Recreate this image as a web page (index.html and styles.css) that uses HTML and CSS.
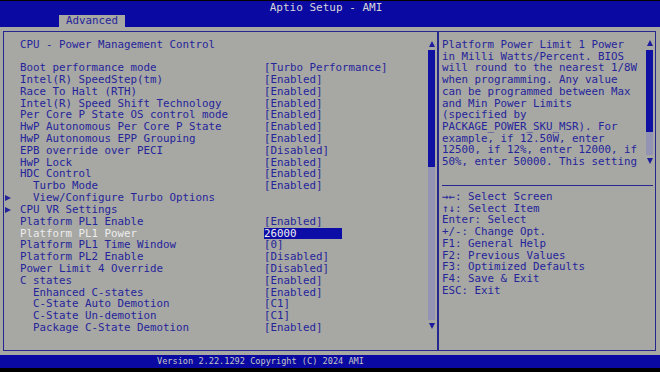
FILE: index.html
```html
<!DOCTYPE html>
<html lang="en">
<head>
  <meta charset="UTF-8">
  <meta name="viewport" content="width=device-width, initial-scale=1.0">
  <title>Aptio Setup - AMI</title>
  <link rel="stylesheet" href="styles.css">
</head>
<body>

  <div class="screen">
    <div class="topbar">
      <div class="title">Aptio Setup - AMI</div>
      <div class="tabs">
        <div class="tab">Advanced</div>
      </div>
    </div>

    <div class="main">
      <div class="panel left">
        <div class="content">
          <div class="heading">CPU - Power Management Control</div>
          <div class="blank"></div>
          <div class="row"><span class="label">Boot performance mode</span><span>[Turbo Performance]</span></div>
          <div class="row"><span class="label">Intel(R) SpeedStep(tm)</span><span>[Enabled]</span></div>
          <div class="row"><span class="label">Race To Halt (RTH)</span><span>[Enabled]</span></div>
          <div class="row"><span class="label">Intel(R) Speed Shift Technology</span><span>[Enabled]</span></div>
          <div class="row"><span class="label">Per Core P State OS control mode</span><span>[Enabled]</span></div>
          <div class="row"><span class="label">HwP Autonomous Per Core P State</span><span>[Enabled]</span></div>
          <div class="row"><span class="label">HwP Autonomous EPP Grouping</span><span>[Enabled]</span></div>
          <div class="row"><span class="label">EPB override over PECI</span><span>[Disabled]</span></div>
          <div class="row"><span class="label">HwP Lock</span><span>[Enabled]</span></div>
          <div class="row"><span class="label">HDC Control</span><span>[Enabled]</span></div>
          <div class="row sub"><span class="label">Turbo Mode</span><span>[Enabled]</span></div>
          <div class="row sub"><i class="marker"></i><span class="label">View/Configure Turbo Options</span><span></span></div>
          <div class="row"><i class="marker"></i><span class="label">CPU VR Settings</span><span></span></div>
          <div class="row"><span class="label">Platform PL1 Enable</span><span>[Enabled]</span></div>
          <div class="row active"><span class="label">Platform PL1 Power</span><span class="edit">26000</span></div>
          <div class="row"><span class="label">Platform PL1 Time Window</span><span>[0]</span></div>
          <div class="row"><span class="label">Platform PL2 Enable</span><span>[Disabled]</span></div>
          <div class="row"><span class="label">Power Limit 4 Override</span><span>[Disabled]</span></div>
          <div class="row"><span class="label">C states</span><span>[Enabled]</span></div>
          <div class="row sub"><span class="label">Enhanced C-states</span><span>[Enabled]</span></div>
          <div class="row sub"><span class="label">C-State Auto Demotion</span><span>[C1]</span></div>
          <div class="row sub"><span class="label">C-State Un-demotion</span><span>[C1]</span></div>
          <div class="row sub"><span class="label">Package C-State Demotion</span><span>[Enabled]</span></div>
        </div>
        <div class="scrollbar long">
          <i class="arrow-up"></i>
          <div class="track"><div class="thumb"></div></div>
          <i class="arrow-down"></i>
        </div>
      </div>

      <div class="panel right">
        <div class="help">
          <div class="help-text">
            <div>Platform Power Limit 1 Power</div>
            <div>in Milli Watts/Percent. BIOS</div>
            <div>will round to the nearest 1/8W</div>
            <div>when programming. Any value</div>
            <div>can be programmed between Max</div>
            <div>and Min Power Limits</div>
            <div>(specified by</div>
            <div>PACKAGE_POWER_SKU_MSR). For</div>
            <div>example, if 12.50W, enter</div>
            <div>12500, if 12%, enter 12000, if</div>
            <div>50%, enter 50000. This setting</div>
          </div>
          <div class="scrollbar short">
            <i class="arrow-up"></i>
            <div class="track"><div class="thumb"></div></div>
            <i class="arrow-down"></i>
          </div>
        </div>
        <div class="divider"></div>
        <div class="keys">
          <div>&rarr;&larr;: Select Screen</div>
          <div>&uarr;&darr;: Select Item</div>
          <div>Enter: Select</div>
          <div>+/-: Change Opt.</div>
          <div>F1: General Help</div>
          <div>F2: Previous Values</div>
          <div>F3: Optimized Defaults</div>
          <div>F4: Save &amp; Exit</div>
          <div>ESC: Exit</div>
        </div>
      </div>
    </div>

    <div class="footer">Version 2.22.1292 Copyright (C) 2024 AMI</div>
  </div>

</body>
</html>
```

FILE: styles.css
```css
body {
  margin: 0;
  padding: 0;
  background: #000;
  font-family: 'DejaVu Sans Mono', 'Liberation Mono', monospace;
  font-size: 10.8px;
  color: #25259a;
}

.screen {
  width: 660px;
  height: 372px;
  display: flex;
  flex-direction: column;
}

.topbar {
  margin-top: 1px;
  height: 26px;
  background: #0a0aa2;
}

.title {
  height: 14px;
  line-height: 14px;
  text-align: center;
  padding-right: 8px;
  color: #d6d6d6;
  font-size: 11px;
}

.tabs {
  display: flex;
  padding-left: 59px;
}

.tab {
  width: 59px;
  height: 12px;
  line-height: 12px;
  padding-left: 7px;
  background: #a7a7a4;
  color: #25259a;
}

.main {
  height: 320px;
  padding: 4px 4px 4px 3px;
  background: #a7a7a4;
  display: flex;
}

.panel {
  height: 318px;
  border: 1px solid #26268f;
  display: flex;
}

.left {
  width: 433px;
}

.right {
  width: 216px;
  flex-direction: column;
}

.content {
  flex: 1;
  padding: 6.5px 0 0 16px;
}

.heading, .blank, .row {
  height: 11.82px;
  line-height: 11.82px;
}

.row {
  position: relative;
  display: grid;
  grid-template-columns: 244px auto;
}

.row span {
  white-space: pre;
}

.row.sub .label {
  padding-left: 13px;
}

.row.active .label {
  color: #ececec;
}

.edit {
  width: 78px;
  background: #0c0ca6;
  color: #f0f0f0;
}

.marker {
  position: absolute;
  left: -15px;
  top: 3px;
  width: 0;
  height: 0;
  border-left: 6px solid #25259a;
  border-top: 3.5px solid transparent;
  border-bottom: 3.5px solid transparent;
}

.scrollbar {
  width: 7px;
  margin-right: 2px;
  display: flex;
  flex-direction: column;
  align-items: center;
}

.arrow-up, .arrow-down {
  width: 0;
  height: 0;
  border-left: 3.5px solid transparent;
  border-right: 3.5px solid transparent;
}

.arrow-up {
  border-bottom: 6px solid #1c1c9c;
}

.arrow-down {
  border-top: 6px solid #1c1c9c;
}

.track {
  width: 7px;
  background: #9393b4;
  margin: 3px 0;
}

.thumb {
  background: #1010a2;
}

.scrollbar.long {
  padding-top: 9px;
}

.scrollbar.long .track {
  height: 270px;
}

.scrollbar.long .thumb {
  height: 117px;
}

.help {
  height: 146px;
  padding-top: 7px;
  display: flex;
}

.help-text {
  flex: 1;
  padding-left: 3px;
  height: 129px;
  overflow: hidden;
  line-height: 11.7px;
}

.help-text div, .keys div {
  white-space: pre;
}

.scrollbar.short {
  padding-top: 1px;
}

.scrollbar.short .arrow-up {
  margin-bottom: 1px;
}

.scrollbar.short .track {
  height: 105px;
}

.scrollbar.short .thumb {
  height: 82px;
}

.divider {
  height: 1px;
  margin: 0 2px 0 3px;
  background: #26268f;
}

.keys {
  padding: 5px 0 0 3px;
  line-height: 11.7px;
}

.footer {
  height: 13px;
  line-height: 13px;
  padding-left: 157px;
  background: #0a0aa2;
  color: #c4c4c4;
  font-size: 8.6px;
}
```
